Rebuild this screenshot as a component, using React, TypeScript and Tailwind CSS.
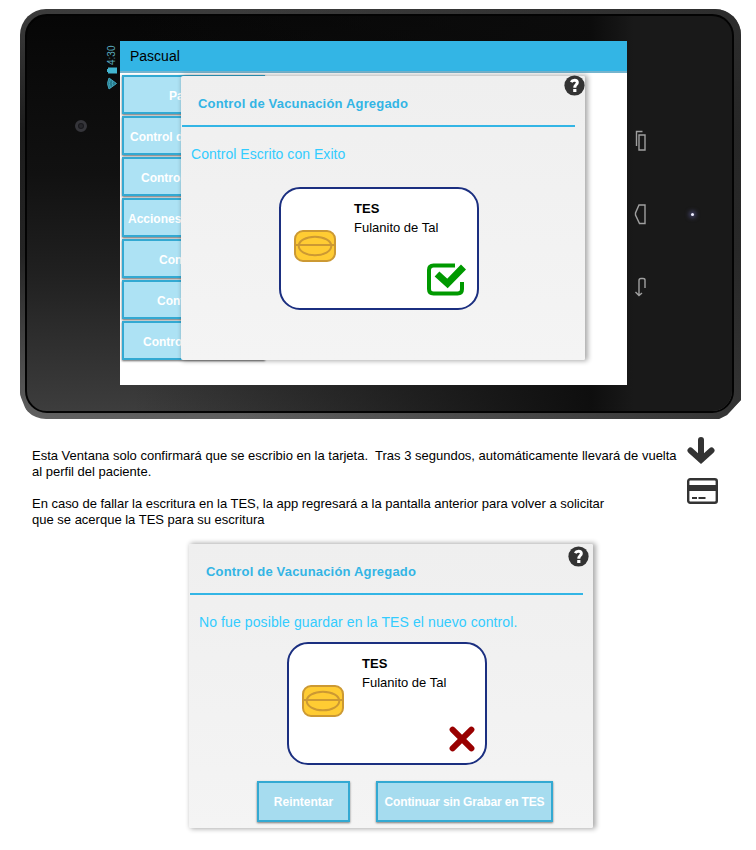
import React from "react";

function HelpIcon() {
  return (
    <svg className="block" width="21" height="21" viewBox="0 0 21 21">
      <circle cx="10.5" cy="10.5" r="10.1" fill="#333" />
      <path d="M7.2 7.2 C8 5.6 9.3 5.3 10.6 5.3 C12.5 5.3 13.4 6.3 13.3 7.6 C13.2 9.7 10.8 9.5 10.8 12.8" fill="none" stroke="#fff" strokeWidth="3" />
      <rect x="9.2" y="14" width="3.200" height="3" fill="#fff" />
    </svg>
  );
}

function Chip() {
  return (
    <svg className="block" width="42" height="32" viewBox="0 0 42 32" fill="none" stroke="#cc9933" strokeWidth="2">
      <rect x="1" y="1" width="40" height="30" rx="8" fill="#ffcc33" />
      <ellipse cx="21" cy="16" rx="16.3" ry="9.3" />
      <path d="M1 15h40" />
    </svg>
  );
}

function CheckMark() {
  return (
    <svg className="block" width="40" height="34" viewBox="0 0 40 34" fill="none" stroke="#009900">
      <path d="M29 2.500H7.500Q3 2.500 3 7V26Q3 30.500 7.500 30.500H31.500Q36 30.500 36 26V17.500" strokeWidth="4" />
      <path d="M38 13L32 19H38Z M33 0H29V5Z" fill="#fff" stroke="none" />
      <path d="M11 11L21.500 20.500L37.500 4" strokeWidth="7" />
    </svg>
  );
}

function CrossMark() {
  return (
    <svg className="block" width="26" height="26" viewBox="0 0 26 26" fill="none" stroke="#990000" strokeWidth="6" strokeLinecap="round">
      <path d="M3.6 3.6L22.4 22.4M22.4 3.6L3.6 22.4" />
    </svg>
  );
}

function TesCard({ ok }: { ok: boolean }) {
  return (
    <div className="flex h-[123px] w-[200px] rounded-[21px] border-2 border-[#1b2f80] bg-white">
      <div className="ml-[13px] mt-[41px] w-[42px]"><Chip /></div>
      <div className="ml-[18px] flex w-[114px] flex-col text-[13px] leading-[19px] text-black">
        <b className="mt-[10px] text-[13px] tracking-[0.1px]">TES</b>
        <span className="whitespace-nowrap">Fulanito de Tal</span>
        {ok ? (
          <div className="ml-[72px] mt-[26px]"><CheckMark /></div>
        ) : (
          <div className="ml-[87px] mt-[34px]"><CrossMark /></div>
        )}
      </div>
    </div>
  );
}

function Dialog({ message, ok, children }: { message: string; ok: boolean; children?: React.ReactNode }) {
  return (
    <section className="relative h-[284px] w-[404px] rounded-[2px] bg-gradient-to-b from-[#efefef] to-[#f4f4f4] shadow-[2px_0px_5px_1px_rgba(0,0,0,0.33)]">
      <div className={ok ? "absolute right-0 top-[-1px]" : "absolute right-[4px] top-[2px]"}><HelpIcon /></div>
      <h2 className="mx-[1px] mr-[10px] h-[51px] border-b-2 border-[#33b5e5] pl-4 pt-[18px] text-[13px] font-bold leading-[20px] tracking-[0.18px] text-[#33b5e5]">
        Control de Vacunación Agregado
      </h2>
      <p className={`ml-[10px] mt-[17px] whitespace-nowrap text-[14px] leading-5 text-[#33ccff] ${ok ? "tracking-[0.04px]" : "tracking-[0.1px]"}`}>{message}</p>
      <div className={ok ? "ml-[98px] mt-[23px]" : "ml-[98px] mt-[10px]"}><TesCard ok={ok} /></div>
      {children}
    </section>
  );
}

const buttonStyle = "border-2 border-[#33a9d2] bg-[#a6dcef] text-[12px] font-bold text-white shadow-[0_1px_2px_rgba(0,0,0,0.5)]";

const menu = [
  { label: "Pa", pad: "pl-[45px]" },
  { label: "Control d", pad: "pl-[6px]" },
  { label: "Control", pad: "pl-[17px]" },
  { label: "Acciones", pad: "pl-[4px]" },
  { label: "Con", pad: "pl-[35px]" },
  { label: "Cont", pad: "pl-[33px]" },
  { label: "Contro", pad: "pl-[19px]" },
];

function StatusBar() {
  return (
    <div className="ml-[19px] mt-[36px] flex w-[12px] flex-col items-center text-[#58a9bc]">
      <span className="h-[20px] rotate-180 text-[10px] leading-[12px] [writing-mode:vertical-rl]">4:30</span>
      <svg className="mt-[2px]" width="11" height="7" viewBox="0 0 11 7" fill="#42b4cf"><path d="M1 .5h9v6H1V5H0V2h1z" /></svg>
      <svg className="mt-[3px]" width="10" height="13" viewBox="0 0 10 13" fill="none" stroke="#42a4bb">
        <path d="M9.5 6.5L2 1Q-1 6.5 2 12Z" fill="#267b8c" />
        <path d="M3.5 2Q1 6.5 3.5 11M6 4Q4.5 6.5 6 9" />
      </svg>
    </div>
  );
}

function NavKeys() {
  return (
    <svg className="ml-[7px] mt-[121px]" width="14" height="170" viewBox="0 0 14 170" fill="none" stroke="#a0a0a0" strokeWidth="1.4">
      <path d="M8.5 1.5H2.5V16M5 5H11V20H5Z" />
      <path d="M11 75V93.500H5.500L1.500 85V83L5 75Z" />
      <path d="M11 158V150Q11 148.500 9 148.500H7Q5 148.500 5 150.500V165M1.500 162L5 165.500L8 163" />
    </svg>
  );
}

function Tablet() {
  return (
    <div className="relative ml-[20px] mt-[9px] flex h-[410px] w-[721px] overflow-hidden rounded-[26px] rounded-br-none bg-[linear-gradient(180deg,#3c3c3c,#1c1c1c_30%,#242424_60%,#606060)] [clip-path:polygon(0_0,100%_0,100%_391px,707px_406px,699px_100%,14px_100%,6px_401px,0_386px)]">
      <div className="absolute inset-0 bg-[linear-gradient(90deg,transparent_30%,#292929)] opacity-80" />
      <div className="absolute bottom-[6px] left-[5px] right-[7px] top-[5px] rounded-[22px] border-2 border-[#030303] bg-[linear-gradient(180deg,#060606_0%,#111_40%,#202020_65%,#3d3d3d_100%)]" />
      <div className="absolute bottom-[8px] left-[7px] right-[9px] top-[7px] rounded-[20px] bg-[linear-gradient(90deg,transparent_15%,rgba(12,12,12,.95)_80%,#191919_86%)]" />
      <div className="relative flex w-[100px]">
        <div className="ml-[55px] mt-[111px] flex size-[12px] items-center justify-center rounded-full border-[3px] border-[#35353a] bg-[#18181c]"><i className="size-1 rounded-full bg-[#26262a]" /></div>
        <StatusBar />
      </div>
      <main className="relative mt-[32px] h-[344px] w-[507px] overflow-hidden bg-white">
        <header className="h-[32px] border-b-2 border-[#75b4ce] bg-[#33b5e5] pl-[10px] text-[14px] leading-[31px] text-black">Pascual</header>
        <nav className="ml-[2px] mt-[2px] flex w-[143px] flex-col gap-[2px]">
          {menu.map((m) => (
            <div key={m.label} className={`h-[39px] whitespace-nowrap border-2 border-[#33a9d2] bg-[#ade2f4] text-[12px] font-bold leading-[38px] text-white shadow-[0_1px_2px_rgba(0,0,0,0.6)] ${m.pad}`}>{m.label}</div>
          ))}
        </nav>
        <div className="absolute left-[61px] top-[35px]"><Dialog message="Control Escrito con Exito" ok /></div>
      </main>
      <div className="relative flex flex-1">
        <NavKeys />
        <i className="ml-[43px] mt-[204px] size-[3px] rounded-full bg-[#eeeeff] shadow-[0_0_4px_2px_#44446a]" />
      </div>
    </div>
  );
}

export default function App() {
  return (
    <div className="flex h-[850px] w-[756px] flex-col overflow-hidden bg-white font-['Liberation_Sans',Arial,sans-serif]">
      <Tablet />
      <div className="flex h-[125px]">
        <div className="ml-8 mt-[29px] w-[650px] whitespace-pre text-[13px] leading-4 text-black">
          <p>Esta Ventana solo confirmará que se escribio en la tarjeta.  Tras 3 segundos, automáticamente llevará de vuelta</p>
          <p>al perfil del paciente.</p>
          <p className="mt-4 tracking-[-0.02px]">En caso de fallar la escritura en la TES, la app regresará a la pantalla anterior para volver a solicitar</p>
          <p>que se acerque la TES para su escritura</p>
        </div>
        <div className="ml-[5px] mt-[18px] flex w-[31px] flex-col items-center gap-[13px]">
          <svg className="mr-[4px]" width="28" height="28" viewBox="0 0 28 28" fill="none" stroke="#333" strokeWidth="6" strokeLinecap="round"><path d="M14 3V22" /><path d="M3.500 13.500L14 23L24.500 13.500" strokeLinejoin="miter" /></svg>
          <svg width="31" height="26" viewBox="0 0 31 26" fill="#333"><rect x="1.200" y="1.200" width="28.600" height="23.600" rx="2" fill="none" stroke="#333" strokeWidth="2.400" /><path d="M1 7h29v6H1zM5 19h5v2H5zM11.500 19h7v2h-7z" /></svg>
        </div>
      </div>
      <div className="ml-[189px]">
        <Dialog message="No fue posible guardar en la TES el nuevo control." ok={false}>
          <div className="ml-[68px] mt-[16px] flex gap-[26px]">
            <button className={`h-[41px] w-[93px] ${buttonStyle}`}>Reintentar</button>
            <button className={`h-[41px] w-[177px] whitespace-nowrap px-0 tracking-[-0.15px] ${buttonStyle}`}>Continuar sin Grabar en TES</button>
          </div>
        </Dialog>
      </div>
    </div>
  );
}
